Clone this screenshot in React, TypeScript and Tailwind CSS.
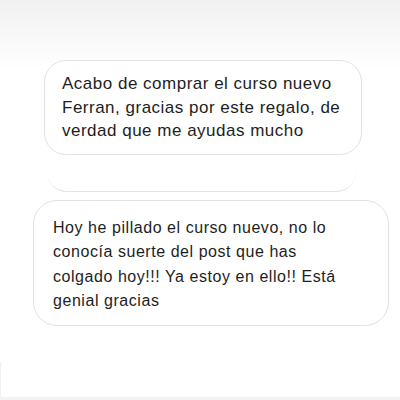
import React from "react";

export default function App() {
  return (
    <div
      className="relative w-[400px] h-[400px] overflow-hidden bg-white flex flex-col"
      style={{ fontFamily: '"Liberation Sans", Arial, sans-serif' }}
    >
      <div className="absolute inset-x-0 top-0 h-[70px] bg-gradient-to-b from-[#f1f1f1] to-white" />
      <div className="relative flex flex-col">
        <div className="mt-[60px] ml-[44px] w-[318px] h-[95px] rounded-[22px] border border-[#e2e2e2] bg-white pl-[17px] pt-[11px] text-[17px] tracking-[0.5px] leading-[23.5px] text-[#1e1e1e] whitespace-nowrap">
          <p>Acabo de comprar el curso nuevo</p>
          <p>Ferran, gracias por este regalo, de</p>
          <p>verdad que me ayudas mucho</p>
        </div>
        <div className="mt-[17px] ml-[47px] w-[309px] h-[20px] rounded-b-[20px] border-b border-[#e4e4e4]" />
        <div className="mt-[8px] ml-[33px] w-[356px] h-[126px] rounded-[24px] border border-[#e2e2e2] bg-white pl-[19px] pt-[15px] text-[16px] tracking-[0.55px] leading-[24.3px] text-[#1e1e1e] whitespace-nowrap">
          <p>Hoy he pillado el curso nuevo, no lo</p>
          <p>conocía suerte del post que has</p>
          <p>colgado hoy!!! Ya estoy en ello!! Está</p>
          <p>genial gracias</p>
        </div>
      </div>
      <div className="absolute left-0 top-[362px] h-[35px] w-px bg-[#f0f0f0]" />
      <div className="absolute inset-x-0 bottom-0 h-[3px] bg-[#f2f2f2]" />
    </div>
  );
}
